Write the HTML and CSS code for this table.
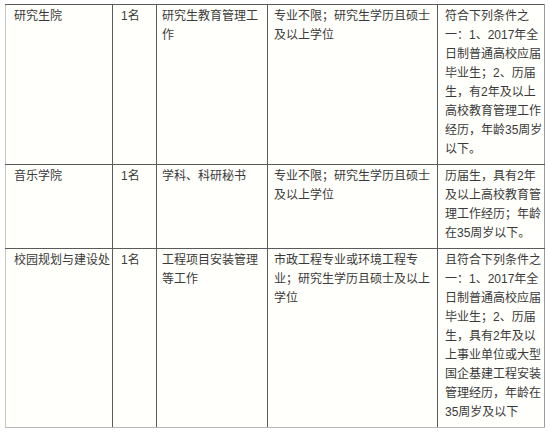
FILE: index.html
```html
<!DOCTYPE html>
<html lang="zh-CN">
<head>
<meta charset="utf-8">
<title>招聘岗位</title>
<link rel="stylesheet" href="styles.css">
</head>
<body>
<table class="jobs">
  <colgroup>
    <col class="c-dept">
    <col class="c-num">
    <col class="c-post">
    <col class="c-major">
    <col class="c-req">
  </colgroup>
  <tbody>
    <tr class="row-first">
      <td class="dept">研究生院</td>
      <td class="num">1名</td>
      <td class="post">研究生教育管理工<br>作</td>
      <td class="major">专业不限；研究生学历且硕士<br>及以上学位</td>
      <td class="req">符合下列条件之<br>一：1、2017年全<br>日制普通高校应届<br>毕业生；2、历届<br>生，有2年及以上<br>高校教育管理工作<br>经历，年龄35周岁<br>以下。</td>
    </tr>
    <tr>
      <td class="dept">音乐学院</td>
      <td class="num">1名</td>
      <td class="post">学科、科研秘书</td>
      <td class="major">专业不限；研究生学历且硕士<br>及以上学位</td>
      <td class="req">历届生，具有2年<br>及以上高校教育管<br>理工作经历；年龄<br>在35周岁以下。</td>
    </tr>
    <tr class="row-last">
      <td class="dept">校园规划与建设处</td>
      <td class="num">1名</td>
      <td class="post">工程项目安装管理<br>等工作</td>
      <td class="major">市政工程专业或环境工程专<br>业；研究生学历且硕士及以上<br>学位</td>
      <td class="req">且符合下列条件之<br>一：1、2017年全<br>日制普通高校应届<br>毕业生；2、历届<br>生，具有2年及以<br>上事业单位或大型<br>国企基建工程安装<br>管理经历，年龄在<br>35周岁及以下</td>
    </tr>
  </tbody>
</table>
</body>
</html>
```

FILE: styles.css
```css
html, body {
  margin: 0;
  padding: 0;
  background: #ffffff;
}

body {
  width: 550px;
  height: 432px;
  overflow: hidden;
  font-family: "Liberation Sans", "Noto Sans CJK SC", sans-serif;
  font-size: 12px;
  color: #3a3a3a;
}

.jobs {
  margin: 4px 0 0 5px;
  width: 539px;
  table-layout: fixed;
  border-collapse: collapse;
  background: #fffffb;
}

.c-dept { width: 107px; }
.c-num { width: 44px; }
.c-post { width: 111px; }
.c-major { width: 170px; }
.c-req { width: 107px; }

.jobs td {
  vertical-align: top;
  line-height: 19px;
  padding: 2px 2px 5px 6px;
  border: 1px solid #5a5a5a;
  white-space: nowrap;
  overflow: hidden;
}

.jobs td.dept {
  border-left-color: #c8c8c0;
  padding-left: 8px;
}

.jobs td.num {
  padding-left: 8px;
}

.jobs td.post {
  padding-left: 5px;
}

.jobs td.req {
  border-right-color: #9a9a9a;
  padding-left: 7px;
}

.row-last td {
  border-bottom-color: #b8b8b0;
}
```
